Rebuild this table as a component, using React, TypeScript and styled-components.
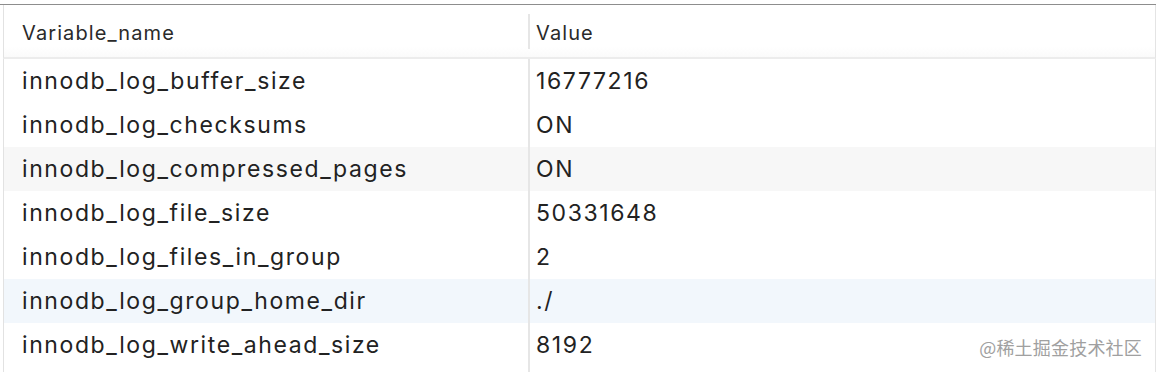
import React from 'react';
import styled, { createGlobalStyle } from 'styled-components';

type Row = { name: string; value: string; tone?: 'striped' | 'hover' };

const rows: Row[] = [
  { name: 'innodb_log_buffer_size', value: '16777216' },
  { name: 'innodb_log_checksums', value: 'ON' },
  { name: 'innodb_log_compressed_pages', value: 'ON', tone: 'striped' },
  { name: 'innodb_log_file_size', value: '50331648' },
  { name: 'innodb_log_files_in_group', value: '2' },
  { name: 'innodb_log_group_home_dir', value: './', tone: 'hover' },
  { name: 'innodb_log_write_ahead_size', value: '8192' },
];

export default function App() {
  return (
    <>
      <GlobalStyle />
      <PageStyle>
        <TableStyle>
          <HeaderRowStyle>
            <HeaderCellStyle>Variable_name</HeaderCellStyle>
            <HeaderCellStyle divided>Value</HeaderCellStyle>
          </HeaderRowStyle>
          {rows.map(row => (
            <RowStyle key={row.name} tone={row.tone}>
              <CellStyle>{row.name}</CellStyle>
              <CellStyle divided>{row.value}</CellStyle>
            </RowStyle>
          ))}
          <FillerRowStyle>
            <CellStyle />
            <CellStyle divided />
          </FillerRowStyle>
        </TableStyle>
        <WatermarkStyle>@稀土掘金技术社区</WatermarkStyle>
      </PageStyle>
    </>
  );
}

const GlobalStyle = createGlobalStyle`
  html, body {
    margin: 0;
    background: #ffffff;
  }
  body {
    font-family: Inter, "Liberation Sans", "Noto Sans CJK SC", sans-serif;
    color: #222222;
  }
`;

const PageStyle = styled.div`
  position: relative;
  width: 1156px;
  height: 372px;
  overflow: hidden;
  padding-top: 4px;
  box-sizing: border-box;
`;

const TableStyle = styled.div`
  display: flex;
  flex-direction: column;
  height: 100%;
  border-top: 1px solid #8d8d8d;
`;

const columns = `
  display: grid;
  grid-template-columns: 524px 628px;
  margin-left: 3px;
  border-left: 1px solid #e2e2e2;
  border-right: 1px solid #e4e4e4;
`;

const HeaderRowStyle = styled.div`
  ${columns}
  height: 52px;
  border-bottom: 2px solid #ececec;
  background: linear-gradient(#ffffff 80%, #fafafa);
  align-items: center;
`;

const HeaderCellStyle = styled.div<{ divided?: boolean }>`
  font-size: 20px;
  letter-spacing: 1.1px;
  color: #2a2a2a;
  padding-left: ${props => (props.divided ? '6px' : '18px')};
  padding-top: 3px;
  line-height: 32px;
  border-left: ${props => (props.divided ? '2px solid #e6e6e6' : 'none')};
`;

const RowStyle = styled.div<{ tone?: 'striped' | 'hover' }>`
  ${columns}
  height: 44px;
  background: ${props =>
    props.tone === 'striped'
      ? '#f7f7f7'
      : props.tone === 'hover'
        ? '#f2f7fc'
        : '#ffffff'};
`;

const FillerRowStyle = styled.div`
  ${columns}
  flex: 1;
`;

const CellStyle = styled.div<{ divided?: boolean }>`
  font-size: 23px;
  letter-spacing: 1.6px;
  line-height: 44px;
  white-space: nowrap;
  padding-left: ${props => (props.divided ? '6px' : '18px')};
  border-left: ${props => (props.divided ? '2px solid #e6e6e6' : 'none')};
`;

const WatermarkStyle = styled.div`
  position: absolute;
  right: 14px;
  bottom: 12px;
  font-family: "Noto Sans CJK SC", sans-serif;
  font-size: 18px;
  color: #a0a0a0;
  letter-spacing: 0.2px;
`;
